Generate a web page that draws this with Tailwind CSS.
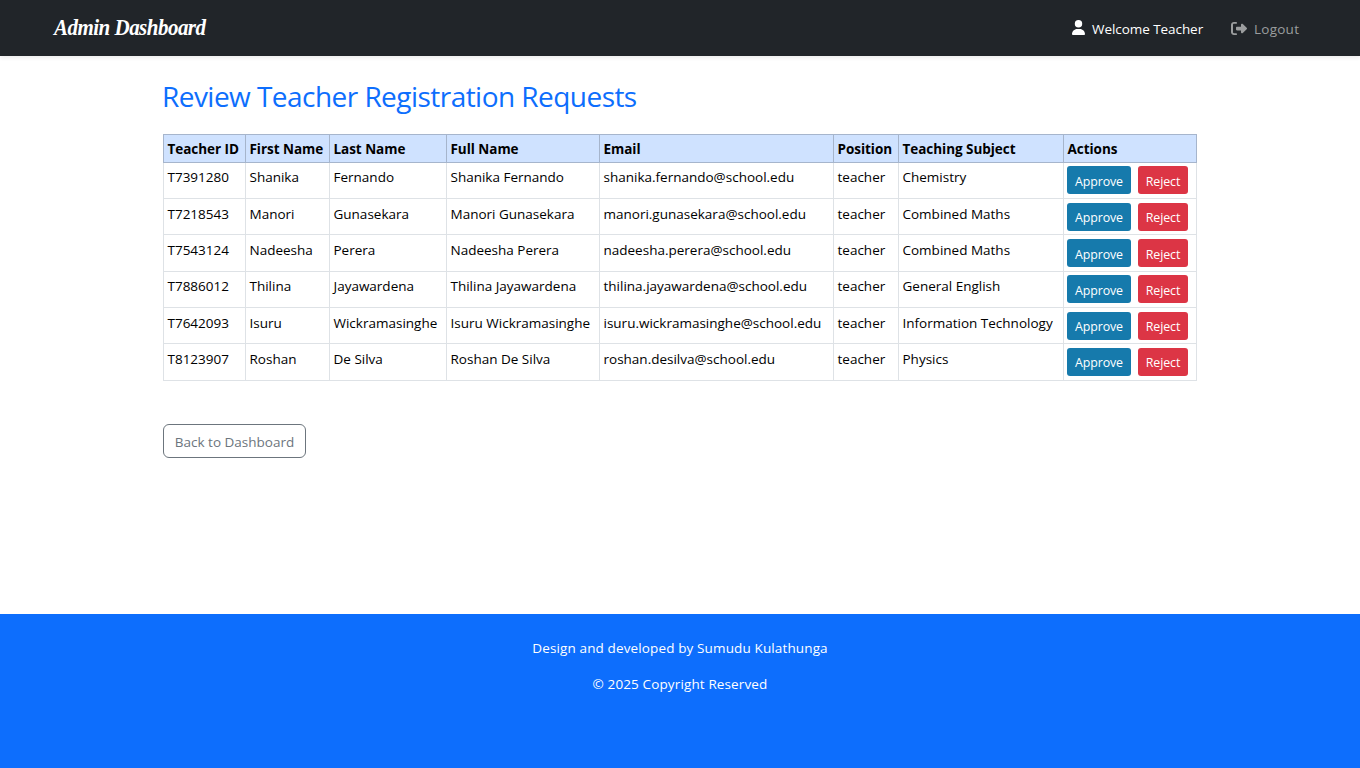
<!DOCTYPE html>
<html lang="en">
<head>
<meta charset="utf-8">
<title>Admin Dashboard</title>
<script src="https://cdn.jsdelivr.net/npm/@tailwindcss/browser@4"></script>
</head>
<body class="flex min-h-screen flex-col bg-white font-['Open_Sans','Noto_Sans',sans-serif] text-[13.5px] text-black">
<nav class="flex h-14 shrink-0 items-center justify-between bg-[#212529] pr-[61px] pl-[54px] shadow-[0_2px_4px_rgba(0,0,0,0.075)]">
  <a class="mb-0.5 origin-center scale-y-112 font-['Liberation_Serif',serif] text-[21px] leading-7 font-bold tracking-[-0.52px] text-white italic">Admin Dashboard</a>
  <div class="flex items-center pt-0.5">
    <svg class="mr-[7px] mb-[3px] h-[15px] w-[13px]" viewBox="0 0 448 512" preserveAspectRatio="none" fill="#fff"><path d="M224 256a128 128 0 1 0 0-256 128 128 0 1 0 0 256zm-45.700 48C79.800 304 0 383.800 0 482.300 0 498.700 13.300 512 29.700 512h388.600c16.400 0 29.700-13.300 29.700-29.700 0-98.500-79.800-178.300-178.300-178.300z"/></svg>
    <span class="w-[112px] tracking-[-0.06px] whitespace-nowrap text-white">Welcome Teacher</span>
    <svg class="mr-[7px] mb-px ml-[27px] h-[15px] w-4" viewBox="0 0 512 512" preserveAspectRatio="none" fill="#9b9d9e"><path d="M377.900 105.900 500.700 228.700c7.200 7.200 11.300 17.100 11.300 27.300s-4.100 20.100-11.300 27.300L377.900 406.100c-6.400 6.400-15 9.900-24 9.900-18.700 0-33.900-15.200-33.900-33.900V320H192c-17.700 0-32-14.300-32-32v-64c0-17.700 14.300-32 32-32h128v-62.100c0-18.700 15.200-33.900 33.900-33.900 9 0 17.600 3.600 24 9.900zM160 96H96c-17.700 0-32 14.300-32 32v256c0 17.700 14.300 32 32 32h64c17.700 0 32 14.300 32 32s-14.300 32-32 32H96c-53 0-96-43-96-96V128c0-53 43-96 96-96h64c17.700 0 32 14.300 32 32s-14.300 32-32 32z"/></svg>
    <span class="w-[45px] tracking-[0.25px] text-[#9b9d9e]">Logout</span>
  </div>
</nav>
<main class="mx-auto w-[1034px] grow pt-[23px]">
  <h2 class="-ml-px h-[55px] text-[28px] leading-[34px] font-normal tracking-[-0.54px] whitespace-nowrap text-[#0d6efd]">Review Teacher Registration Requests</h2>
  <table class="w-[1034px] table-fixed border-collapse text-left">
    <colgroup><col class="w-[82px]"><col class="w-[84px]"><col class="w-[117px]"><col class="w-[153px]"><col class="w-[234px]"><col class="w-[65px]"><col class="w-[165px]"><col class="w-[133px]"></colgroup>
    <thead><tr id="head" class="h-7 bg-[#cfe2ff]"></tr></thead>
    <tbody id="rows"></tbody>
  </table>
  <a class="mt-[43px] flex h-[34px] w-[143px] items-center justify-center rounded-md border border-[#6c757d] pt-0.5 whitespace-nowrap text-[#6c757d]">Back to Dashboard</a>
</main>
<footer class="flex h-[154px] shrink-0 flex-col items-center gap-4 bg-[#0d6efd] pt-6 leading-5 tracking-[0.13px] text-white">
  <p>Design and developed by Sumudu Kulathunga</p>
  <p>© 2025 Copyright Reserved</p>
</footer>
<script>
const heads = ['Teacher ID','First Name','Last Name','Full Name','Email','Position','Teaching Subject','Actions'];
const teachers = [
  ['T7391280','Shanika','Fernando','shanika.fernando@school.edu','Chemistry'],
  ['T7218543','Manori','Gunasekara','manori.gunasekara@school.edu','Combined Maths'],
  ['T7543124','Nadeesha','Perera','nadeesha.perera@school.edu','Combined Maths'],
  ['T7886012','Thilina','Jayawardena','thilina.jayawardena@school.edu','General English'],
  ['T7642093','Isuru','Wickramasinghe','isuru.wickramasinghe@school.edu','Information Technology'],
  ['T8123907','Roshan','De Silva','roshan.desilva@school.edu','Physics']
];
document.getElementById('head').innerHTML = heads.map(h =>
  `<th class="border border-[#a6b5cc] p-0 pl-[3.500px] pt-px leading-5 font-bold tracking-[-0.04px] whitespace-nowrap">${h}</th>`).join('');
document.getElementById('rows').innerHTML = teachers.map((t, i) => {
  const [id, first, last, email, subject] = t;
  const pad = i % 3 ? 'pt-1' : 'pt-[3px]';
  const cells = [id, first, last, first + ' ' + last, email, 'teacher', subject].map(v =>
    `<td class="border border-[#dee2e6] px-0 pb-0 pl-[3.500px] ${pad} align-top leading-[23px] whitespace-nowrap">${v}</td>`).join('');
  const btn = 'flex h-7 items-center justify-center rounded-[3px] text-[12.400px] tracking-[-0.1px] text-white';
  const drop = i === 1 || i > 3 ? 'pt-[3px]' : 'pt-1';
  return `<tr class="${i % 3 === 2 ? 'h-[37px]' : 'h-9'}">${cells}<td class="border border-[#dee2e6] px-0 pb-0 pl-[3px] ${pad} align-top"><div class="flex gap-[7px]"><button class="${btn} ${drop} w-16 bg-[#167aac]">Approve</button><button class="${btn} ${drop} w-[50px] bg-[#dc3545]">Reject</button></div></td></tr>`;
}).join('');
</script>
</body>
</html>
